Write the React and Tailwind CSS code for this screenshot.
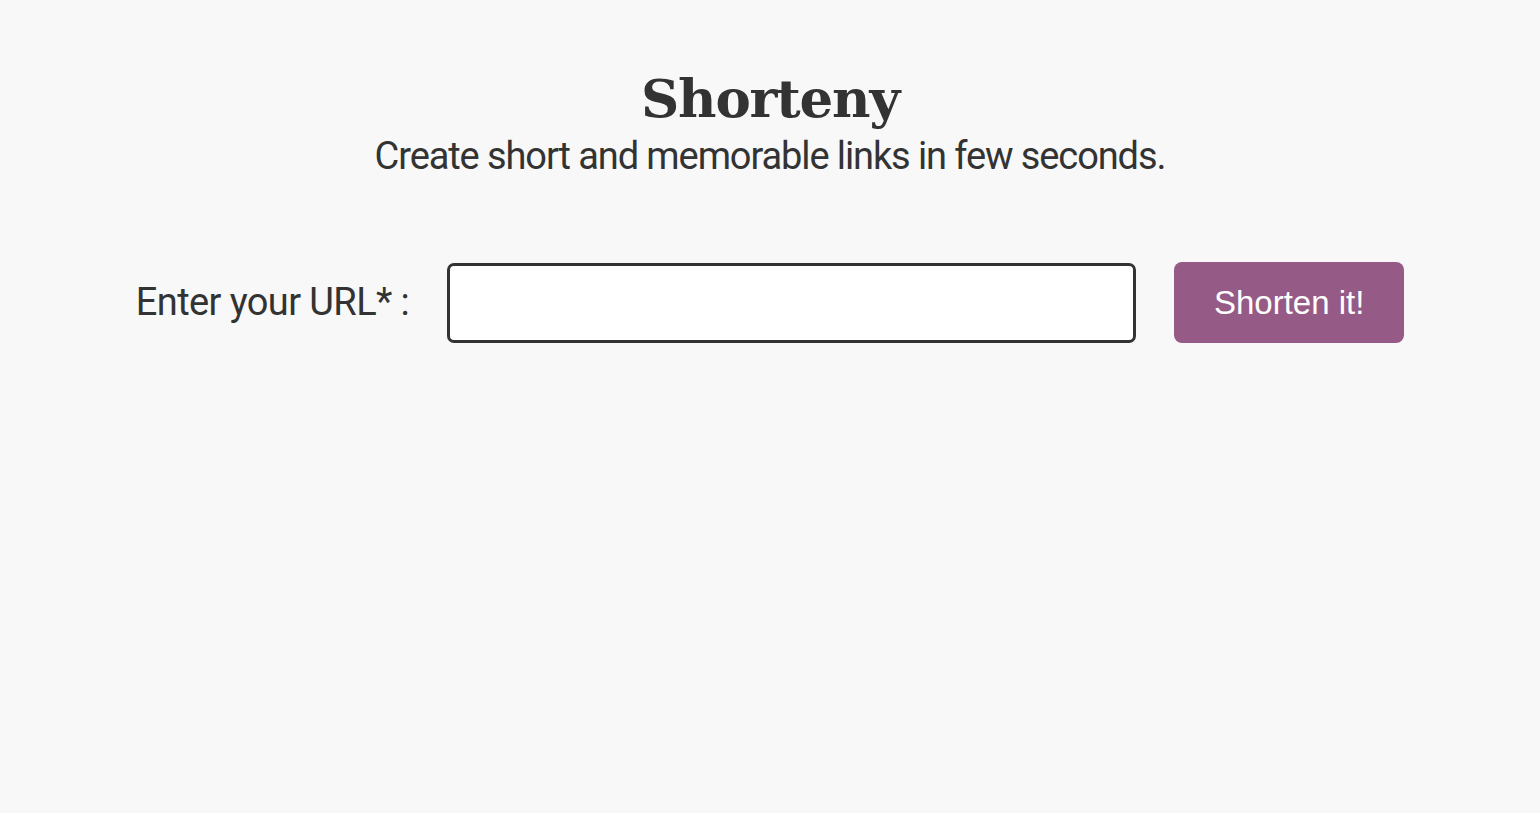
export default function App() {
  return (
    <div className="min-h-[813px] w-full bg-[#f8f8f8] text-[#333333]">
      <header className="flex flex-col items-center pt-[62px]">
        <h1 className="text-[53px] leading-[72px] font-bold font-['DejaVu_Serif',serif] tracking-[-1.2px]">
          Shorteny
        </h1>
        <p className="text-[38px] leading-[44px] font-['Roboto',sans-serif] font-normal tracking-[-1.1px]">
          Create short and memorable links in few seconds.
        </p>
      </header>

      <form className="mt-[84px] flex items-center justify-center gap-[38px]">
        <label className="text-[38px] font-['Roboto',sans-serif] font-normal tracking-[-0.6px]">
          Enter your URL* :
        </label>
        <input
          type="text"
          className="h-[80px] w-[689px] rounded-[7px] border-[3px] border-[#333333] bg-white px-3 text-2xl outline-none"
        />
        <button
          type="button"
          className="h-[81px] w-[230px] rounded-[8px] bg-[#955b86] text-[33px] text-white font-['Liberation_Sans',Arial,sans-serif]"
        >
          Shorten it!
        </button>
      </form>
    </div>
  );
}
